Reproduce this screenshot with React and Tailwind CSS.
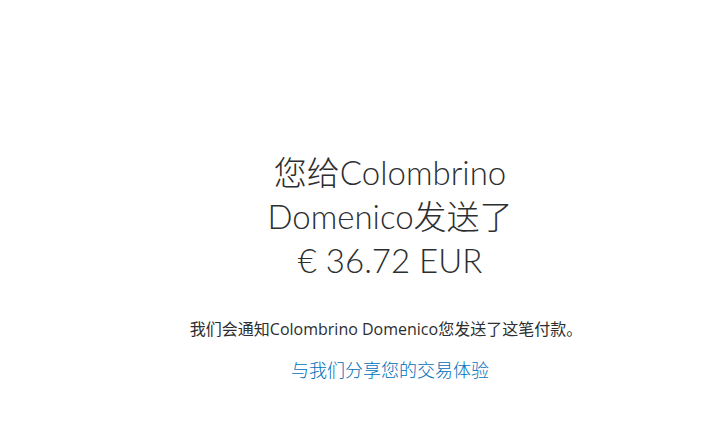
export default function App() {
  return (
    <div className="w-[728px] h-[434px] bg-white overflow-hidden pl-[52px]">
      <div className="flex flex-col items-center pt-[150px]">
        <h1 className="w-[310px] text-center text-[33px] leading-[44px] font-light text-[#2c2e2f] font-['Lato','Noto_Sans_CJK_SC',sans-serif]">
          您给Colombrino Domenico发送了
          <br />€ 36.72 EUR
        </h1>
        <p className="mt-[36px] pr-[8px] text-[16px] leading-[22px] text-[#2c2e2f] text-center font-['Open_Sans','Noto_Sans_CJK_SC',sans-serif]">
          我们会通知Colombrino Domenico您发送了这笔付款。
        </p>
        <a
          href="#"
          className="mt-[18px] text-[18px] leading-[24px] font-light text-[#0070ba] text-center font-['Open_Sans','Noto_Sans_CJK_SC',sans-serif]"
        >
          与我们分享您的交易体验
        </a>
      </div>
    </div>
  );
}
